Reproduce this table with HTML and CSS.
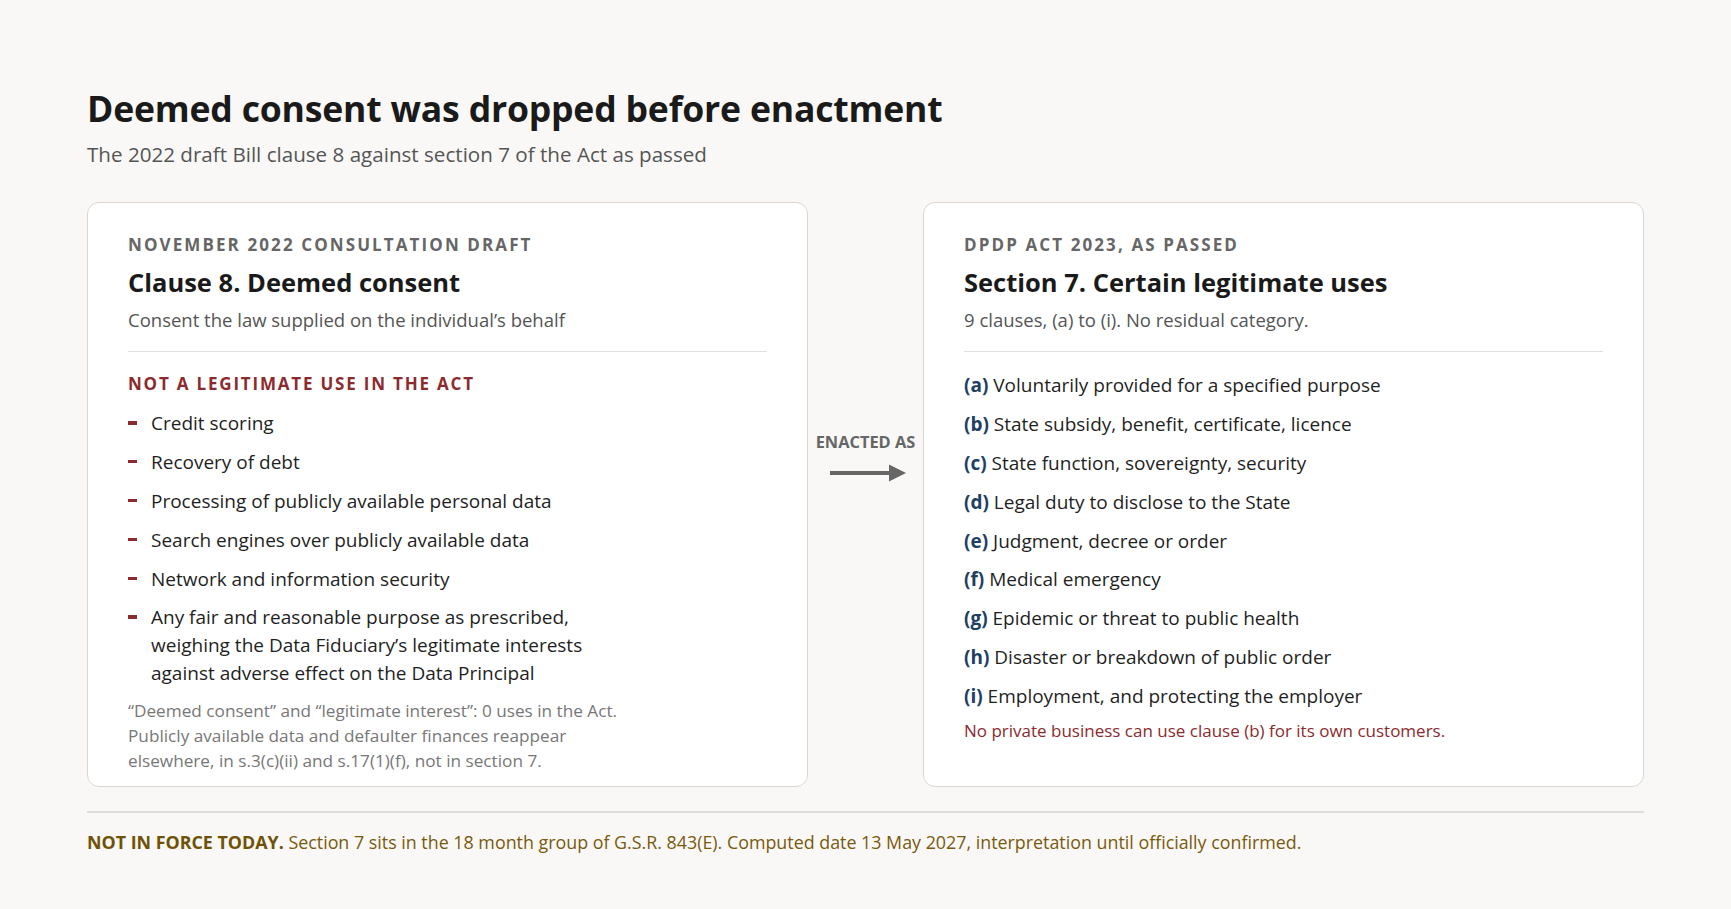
FILE: index.html
```html
<!DOCTYPE html>
<html lang="en">
<head>
<meta charset="utf-8">
<title>Deemed consent was dropped before enactment</title>
<link rel="stylesheet" href="styles.css">
</head>
<body>
<main class="page">
  <header class="head">
    <h1 class="title">Deemed consent was dropped before enactment</h1>
    <p class="subtitle">The 2022 draft Bill clause 8 against section 7 of the Act as passed</p>
  </header>

  <section class="compare">
    <article class="card">
      <div class="eyebrow">November 2022 consultation draft</div>
      <h2 class="card-title">Clause 8. Deemed consent</h2>
      <p class="card-sub">Consent the law supplied on the individual’s behalf</p>
      <hr class="rule">
      <div class="label-red">Not a legitimate use in the Act</div>
      <ul class="dash-list">
        <li>Credit scoring</li>
        <li>Recovery of debt</li>
        <li>Processing of publicly available personal data</li>
        <li>Search engines over publicly available data</li>
        <li>Network and information security</li>
        <li>Any fair and reasonable purpose as prescribed, weighing the Data Fiduciary’s legitimate interests against adverse effect on the Data Principal</li>
      </ul>
      <p class="note">“Deemed consent” and “legitimate interest”: 0 uses in the Act. Publicly available data and defaulter finances reappear elsewhere, in s.3(c)(ii) and s.17(1)(f), not in section 7.</p>
    </article>

    <div class="mid">
      <span class="mid-label">Enacted as</span>
      <svg class="arrow" width="76" height="22" viewBox="0 0 76 22" aria-hidden="true">
        <line x1="0" y1="11" x2="61" y2="11" stroke="#666" stroke-width="3.8"/>
        <polygon points="59,2.5 76,11 59,19.5" fill="#666"/>
      </svg>
    </div>

    <article class="card">
      <div class="eyebrow">DPDP Act 2023, as passed</div>
      <h2 class="card-title">Section 7. Certain legitimate uses</h2>
      <p class="card-sub">9 clauses, (a) to (i). No residual category.</p>
      <hr class="rule">
      <ul class="clause-list">
        <li><b>(a)</b> Voluntarily provided for a specified purpose</li>
        <li><b>(b)</b> State subsidy, benefit, certificate, licence</li>
        <li><b>(c)</b> State function, sovereignty, security</li>
        <li><b>(d)</b> Legal duty to disclose to the State</li>
        <li><b>(e)</b> Judgment, decree or order</li>
        <li><b>(f)</b> Medical emergency</li>
        <li><b>(g)</b> Epidemic or threat to public health</li>
        <li><b>(h)</b> Disaster or breakdown of public order</li>
        <li><b>(i)</b> Employment, and protecting the employer</li>
      </ul>
      <p class="note-red">No private business can use clause (b) for its own customers.</p>
    </article>
  </section>

  <footer class="foot">
    <p><b>NOT IN FORCE TODAY.</b> Section 7 sits in the 18 month group of G.S.R. 843(E). Computed date 13 May 2027, interpretation until officially confirmed.</p>
  </footer>
</main>
</body>
</html>
```

FILE: styles.css
```css
* { box-sizing: border-box; }

html, body {
  margin: 0;
  padding: 0;
}

body {
  background: #f9f8f6;
  color: #1c1c1c;
  font-family: "Open Sans", "Noto Sans", "Liberation Sans", sans-serif;
}

.page {
  width: 1731px;
  padding: 86px 87px 0;
}

.head {
  margin-bottom: 34px;
}

.title {
  margin: 0;
  font-size: 35.6px;
  line-height: 44px;
  font-weight: 700;
  color: #1a1a1a;
  letter-spacing: -0.2px;
}

.subtitle {
  margin: 11px 0 0;
  font-size: 20.6px;
  line-height: 27px;
  color: #555;
}

.compare {
  display: grid;
  grid-template-columns: 1fr 115px 1fr;
}

.card {
  background: #fff;
  border: 1.6px solid #dad7d2;
  border-radius: 12px;
  padding: 30px 40px 12px;
}

.eyebrow {
  font-size: 17px;
  line-height: 24px;
  font-weight: 700;
  letter-spacing: 2.1px;
  text-transform: uppercase;
  color: #666;
}

.card-title {
  margin: 8px 0 0;
  font-size: 25.5px;
  line-height: 34px;
  font-weight: 700;
  color: #1a1a1a;
}

.card-sub {
  margin: 8px 0 0;
  font-size: 18.5px;
  line-height: 26px;
  color: #555;
}

.rule {
  margin: 18px 0 0;
  border: 0;
  border-top: 1.5px solid #e2e0dc;
}

.label-red {
  margin-top: 20px;
  font-size: 17px;
  line-height: 24px;
  font-weight: 700;
  letter-spacing: 1.8px;
  text-transform: uppercase;
  color: #8c2b2e;
}

.dash-list,
.clause-list {
  list-style: none;
  margin: 0;
  padding: 0;
  font-size: 19px;
  line-height: 27.6px;
  color: #1f1f1f;
}

.dash-list {
  margin-top: 14px;
  max-width: 505px;
  display: flex;
  flex-direction: column;
  gap: 11.3px;
}

.dash-list li {
  position: relative;
  padding-left: 23px;
}

.dash-list li::before {
  content: "";
  position: absolute;
  left: 0;
  top: 11px;
  width: 9px;
  height: 3.5px;
  background: #8c2b2e;
}

.note {
  margin: 12px 0 0;
  max-width: 505px;
  font-size: 17.2px;
  line-height: 24.8px;
  color: #777;
}

.clause-list {
  margin-top: 20px;
  display: flex;
  flex-direction: column;
  gap: 11.3px;
}

.clause-list b {
  color: #213f63;
  font-weight: 700;
}

.note-red {
  margin: 8px 0 0;
  font-size: 17px;
  line-height: 24px;
  color: #8c2b2e;
}

.mid {
  display: flex;
  flex-direction: column;
  align-items: center;
  padding-top: 230px;
  gap: 10px;
}

.mid-label {
  font-size: 16.4px;
  line-height: 20px;
  font-weight: 700;
  color: #666;
  text-transform: uppercase;
}

.arrow {
  display: block;
  margin-left: 4px;
}

.foot {
  margin-top: 24px;
  border-top: 2px solid #dfddd9;
  padding-top: 16px;
}

.foot p {
  margin: 0;
  font-size: 17.85px;
  line-height: 26px;
  color: #7a5a0c;
}

.foot b {
  font-weight: 700;
  color: #6f5206;
}
```
